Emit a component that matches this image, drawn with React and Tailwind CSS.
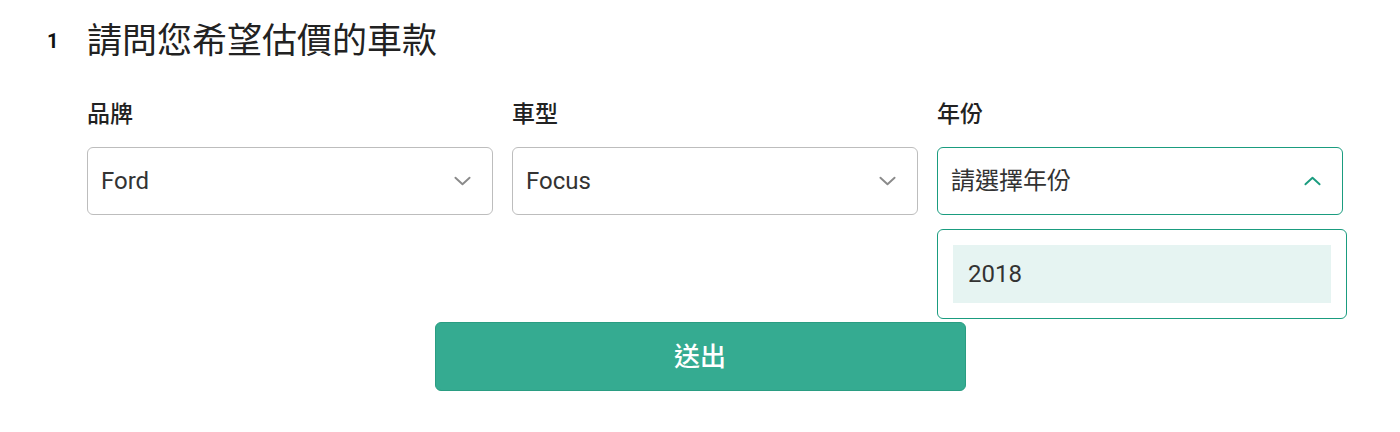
import React from 'react';

const FONT = { fontFamily: 'Roboto, "Noto Sans CJK TC", "Noto Sans", sans-serif' };

function Chevron({ up, className }) {
  return (
    <svg viewBox="0 0 18 10" className={className} fill="none" stroke="currentColor" strokeWidth="2" strokeLinecap="round" strokeLinejoin="round">
      {up ? <path d="M1.5 8.5 9 1.5l7.5 7" /> : <path d="M1.5 1.5 9 8.5l7.5-7" />}
    </svg>
  );
}

function Field({ label, value, open, children }) {
  return (
    <div className="relative flex flex-col">
      <div className="text-[23px] font-medium text-[#222] leading-none h-[24px] mb-[20px]">{label}</div>
      <button
        className={`flex items-center justify-between h-[68px] px-[13px] rounded-[6px] border bg-white text-left ${open
          ? 'border-[#1a9c7f]' : 'border-[#bdbdbd]'}`}>
        <span className="text-[24px] text-[#333] leading-none">{value}</span>
        <Chevron up={open}
          className={`w-[17px] h-[10px] mr-[8px] ${open ? 'text-[#1a9c7f]' : 'text-[#8a8a8a]'}`} />
      </button>
      {children}
    </div>
  );
}

export default function App() {
  return (
    <div className="min-h-[432px] bg-white pt-[23px] pl-[47px] pr-[57px]" style={FONT}>
      <div className="flex items-center h-[36px]">
        <span className="w-[40px] text-[20px] font-bold text-[#111] leading-none">1</span>
        <h1 className="text-[35px] text-[#222] leading-none">請問您希望估價的車款</h1>
      </div>

      <div className="ml-[40px] mt-[44px] grid grid-cols-3 gap-[19px]">
        <Field label="品牌" value="Ford" />
        <Field label="車型" value="Focus" />
        <Field label="年份" value="請選擇年份" open>
          <div className="absolute top-[126px] left-0 w-[410px] rounded-[6px] border border-[#1a9c7f] bg-white p-[15px] z-10">
            <div className="h-[58px] flex items-center px-[15px] bg-[#e6f4f2] text-[24px] text-[#333] leading-none">2018</div>
          </div>
        </Field>
      </div>

      <div className="flex justify-center mt-[107px] mr-[-10px]">
        <button className="w-[531px] h-[69px] rounded-[6px] bg-[#35ab91] border border-[#2a9d82] text-white text-[26px] font-medium leading-none">
          送出
        </button>
      </div>
    </div>
  );
}
